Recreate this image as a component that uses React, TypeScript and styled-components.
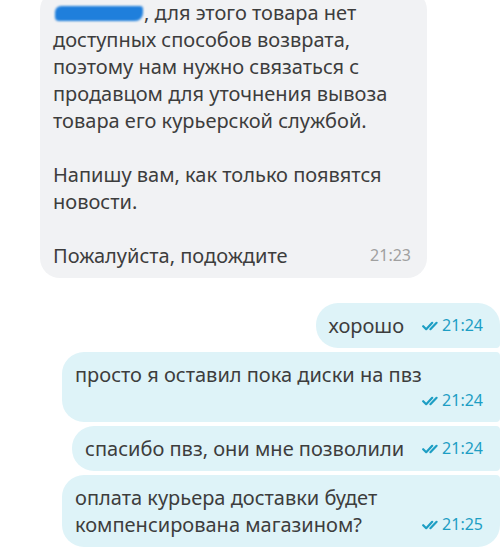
import React from 'react';
import styled, { createGlobalStyle } from 'styled-components';

const GlobalStyle = createGlobalStyle`
  html, body {
    margin: 0;
    padding: 0;
    background: #ffffff;
  }
  body {
    font-family: 'Noto Sans', 'Open Sans', 'Liberation Sans', sans-serif;
    color: #3d3d3d;
    overflow: hidden;
  }
`;

const Feed = styled.div`
  display: flex;
  flex-direction: column;
  align-items: flex-end;
  gap: 4px;
  padding: 0 3px 0 40px;
  width: 503px;
  box-sizing: border-box;
`;

// входящее сообщение (серый пузырь)
const Incoming = styled.div`
  align-self: flex-start;
  display: flex;
  flex-direction: column;
  gap: 27px;
  box-sizing: border-box;
  width: 387px;
  margin-top: -10px;
  margin-bottom: 21px;
  padding: 9px 16px 9px 13px;
  background: #f1f2f4;
  border-radius: 20px;
  font-size: 20px;
  line-height: 27px;
`;

const Paragraph = styled.p`
  margin: 0;
  white-space: pre-line;
`;

type Pos = 'first' | 'middle' | 'last';

const radius: Record<Pos, string> = {
  first: '22px 22px 4px 22px',
  middle: '22px 4px 4px 22px',
  last: '22px 4px 22px 22px',
};

const Outgoing = styled.div<{ $pos: Pos; $wide?: boolean }>`
  box-sizing: border-box;
  max-width: 438px;
  width: ${(p) => (p.$wide ? '438px' : 'auto')};
  padding: 9px 17px 9px 13px;
  background: #def3f8;
  border-radius: ${(p) => radius[p.$pos]};
  font-size: 20px;
  line-height: 27px;
`;

const Redacted = styled.span`
  display: inline-block;
  width: 88px;
  height: 15px;
  margin: 0 1px -1px 2px;
  background: #1f7fdc;
  border-radius: 6px 3px 8px 4px;
  filter: blur(1px);
  vertical-align: baseline;
`;

const Meta = styled.span<{ $below?: boolean; $muted?: boolean }>`
  display: ${(p) => (p.$below ? 'flex' : 'inline-flex')};
  justify-content: flex-end;
  align-items: center;
  gap: 3px;
  float: ${(p) => (p.$below ? 'none' : 'right')};
  margin-left: 18px;
  font-size: 16px;
  line-height: ${(p) => (p.$below ? '25px' : '27px')};
  color: ${(p) => (p.$muted ? '#a0a0a0' : '#1d9ec4')};
  white-space: nowrap;
`;

const Check = () => (
  <svg width="17" height="10" viewBox="0 0 17 10" fill="none">
    <path d="M1.2 5.2 L4.2 8.2 L10.2 1.8" stroke="#1d9ec4" strokeWidth="2.2" strokeLinecap="round" strokeLinejoin="round" />
    <path d="M8.4 8.2 L14.6 1.8" stroke="#1d9ec4" strokeWidth="2.2" strokeLinecap="round" />
  </svg>
);

const Time: React.FC<{ value: string; below?: boolean }> = ({ value, below }) => (
  <Meta $below={below}>
    <Check />
    {value}
  </Meta>
);

export default function App() {
  return (
    <>
      <GlobalStyle />
      <Feed>
        <Incoming>
          <Paragraph>
            <Redacted />
            {', для этого товара нет\nдоступных способов возврата,\nпоэтому нам нужно связаться с\nпродавцом для уточнения вывоза\nтовара его курьерской службой.'}
          </Paragraph>
          <Paragraph>{'Напишу вам, как только появятся\nновости.'}</Paragraph>
          <Paragraph>
            Пожалуйста, подождите
            <Meta $muted>21:23</Meta>
          </Paragraph>
        </Incoming>

        <Outgoing $pos="first">
          хорошо
          <Time value="21:24" />
        </Outgoing>
        <Outgoing $pos="middle" $wide>
          просто я оставил пока диски на пвз
          <Time value="21:24" below />
        </Outgoing>
        <Outgoing $pos="middle">
          спасибо пвз, они мне позволили
          <Time value="21:24" />
        </Outgoing>
        <Outgoing $pos="last">
          оплата курьера доставки будет компенсирована магазином?
          <Time value="21:25" />
        </Outgoing>
      </Feed>
    </>
  );
}
